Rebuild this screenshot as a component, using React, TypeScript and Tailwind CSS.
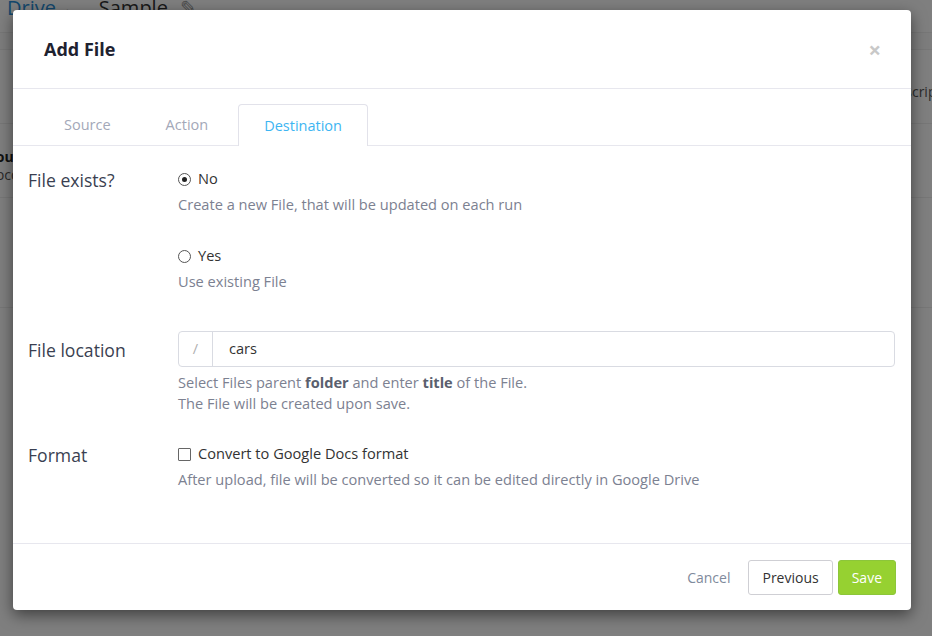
import React from "react";

const font = { fontFamily: "'Open Sans', 'Noto Sans', sans-serif" };

function Radio({ checked }: { checked?: boolean }) {
  return (
    <span className="w-[13px] h-[13px] rounded-full border border-[#555] flex items-center justify-center shrink-0">
      {checked && <span className="w-[5px] h-[5px] rounded-full bg-[#222]" />}
    </span>
  );
}

export default function App() {
  return (
    <div className="relative w-[932px] h-[636px] overflow-hidden bg-white" style={font}>
      {/* background page */}
      <div className="flex flex-col">
        <div className="h-[37px] flex items-start -mt-[5px] pl-[7px] text-[20px] leading-[26px]">
          <span className="text-[#2a8fd8]">Drive</span>
          <span className="text-[#bbb] text-[16px] mt-[3px] ml-[10px]">›</span>
          <span className="text-[#333] ml-[28px]">Sample</span>
          <span className="text-[#999] ml-[12px]">✎</span>
        </div>
        <div className="h-[18px] border-y border-[#eee] bg-[#fafafa]" />
        <div className="h-[74px] border-b border-[#eee] flex items-center justify-end pt-[10px] text-[14px] text-[#555]">
          <span className="-mr-[30px]">Description</span>
        </div>
        <div className="h-[74px] border-b border-[#eee] flex flex-col justify-center pt-[10px] -ml-[12px] text-[14px]">
          <span className="font-bold text-[#222] leading-[18px]">Source</span>
          <span className="text-[#555] leading-[18px]">abcd</span>
        </div>
        <div className="h-[110px] border-b border-[#eee]" />
      </div>

      {/* overlay */}
      <div className="absolute inset-0 bg-[#000000]/50">
        <div className="mt-[10px] ml-[13px] w-[898px] h-[600px] bg-white rounded-[4px] shadow-[0_5px_15px_rgba(0,0,0,0.5)] flex flex-col">
          {/* header */}
          <div className="h-[79px] border-b border-[#e7e7ee] flex items-center justify-between pl-[31px] pr-[30px]">
            <span className="text-[18px] font-bold text-[#1e2230]">Add File</span>
            <span className="text-[#c8c8c8] text-[22px] font-bold leading-none">×</span>
          </div>
          {/* tabs */}
          <div className="h-[57px] pt-[16px] pl-[26px] border-b border-[#e7e7ee] flex items-end gap-[5px] text-[14.5px]">
            <div className="h-[41px] px-[25px] flex items-center text-[#a3a8b8]">Source</div>
            <div className="h-[41px] px-[25px] flex items-center text-[#a3a8b8]">Action</div>
            <div className="h-[42px] -mb-px px-[25px] flex items-center text-[#3db5f2] bg-white border border-b-0 border-[#e2e2ea] rounded-t-[4px]">
              Destination
            </div>
          </div>
          {/* body */}
          <div className="h-[398px] pl-[15px] pr-[16px] pt-[25px] border-b border-[#e7e7ee] text-[14.6px]">
            <div className="flex">
              <div className="w-[150px] text-[17.6px] text-[#3a3f51] leading-[22px] -mt-[2px]">File exists?</div>
              <div className="flex-1 text-[#7c8191]">
                <div className="flex items-center gap-[7px] h-[20px] -mt-[2px] text-[#333]">
                  <Radio checked />
                  <span>No</span>
                </div>
                <div className="mt-[5px] leading-[20px]">Create a new File, that will be updated on each run</div>
                <div className="mt-[32px] flex items-center gap-[7px] h-[20px] text-[#333]">
                  <Radio />
                  <span>Yes</span>
                </div>
                <div className="mt-[5px] leading-[20px]">Use existing File</div>
              </div>
            </div>
            <div className="flex mt-[40px]">
              <div className="w-[150px] text-[17.6px] text-[#3a3f51] h-[36px] flex items-center pt-[2px]">File location</div>
              <div className="flex-1 text-[#7c8191]">
                <div className="h-[36px] border border-[#d9dbe2] rounded-[4px] flex">
                  <div className="w-[34px] border-r border-[#d9dbe2] flex items-center justify-center text-[#b0b0b0]">/</div>
                  <div className="flex items-center pl-[16px] text-[#333]">cars</div>
                </div>
                <div className="mt-[5px] leading-[21px]">
                  Select Files parent <b className="text-[#5a5f6e]">folder</b> and enter <b className="text-[#5a5f6e]">title</b> of the File.
                  <br />
                  The File will be created upon save.
                </div>
              </div>
            </div>
            <div className="flex mt-[30px]">
              <div className="w-[150px] text-[17.6px] text-[#3a3f51] leading-[22px]">Format</div>
              <div className="flex-1 text-[#7c8191]">
                <div className="flex items-center gap-[7px] h-[20px] text-[#333]">
                  <span className="w-[13px] h-[13px] border border-[#666] rounded-[1px] shrink-0" />
                  <span>Convert to Google Docs format</span>
                </div>
                <div className="mt-[5px] leading-[20px]">After upload, file will be converted so it can be edited directly in Google Drive</div>
              </div>
            </div>
          </div>
          {/* footer */}
          <div className="flex-1 flex items-center justify-end pr-[15px] text-[14px]">
            <span className="text-[#7f8a9c] mr-[18px]">Cancel</span>
            <button className="h-[35px] px-[13px] border border-[#cfcfd4] rounded-[3px] text-[#333] bg-white">Previous</button>
            <button className="h-[35px] px-[13px] ml-[5px] border border-[#8cc63a] rounded-[3px] text-white bg-[#96d131]">Save</button>
          </div>
        </div>
      </div>
    </div>
  );
}
